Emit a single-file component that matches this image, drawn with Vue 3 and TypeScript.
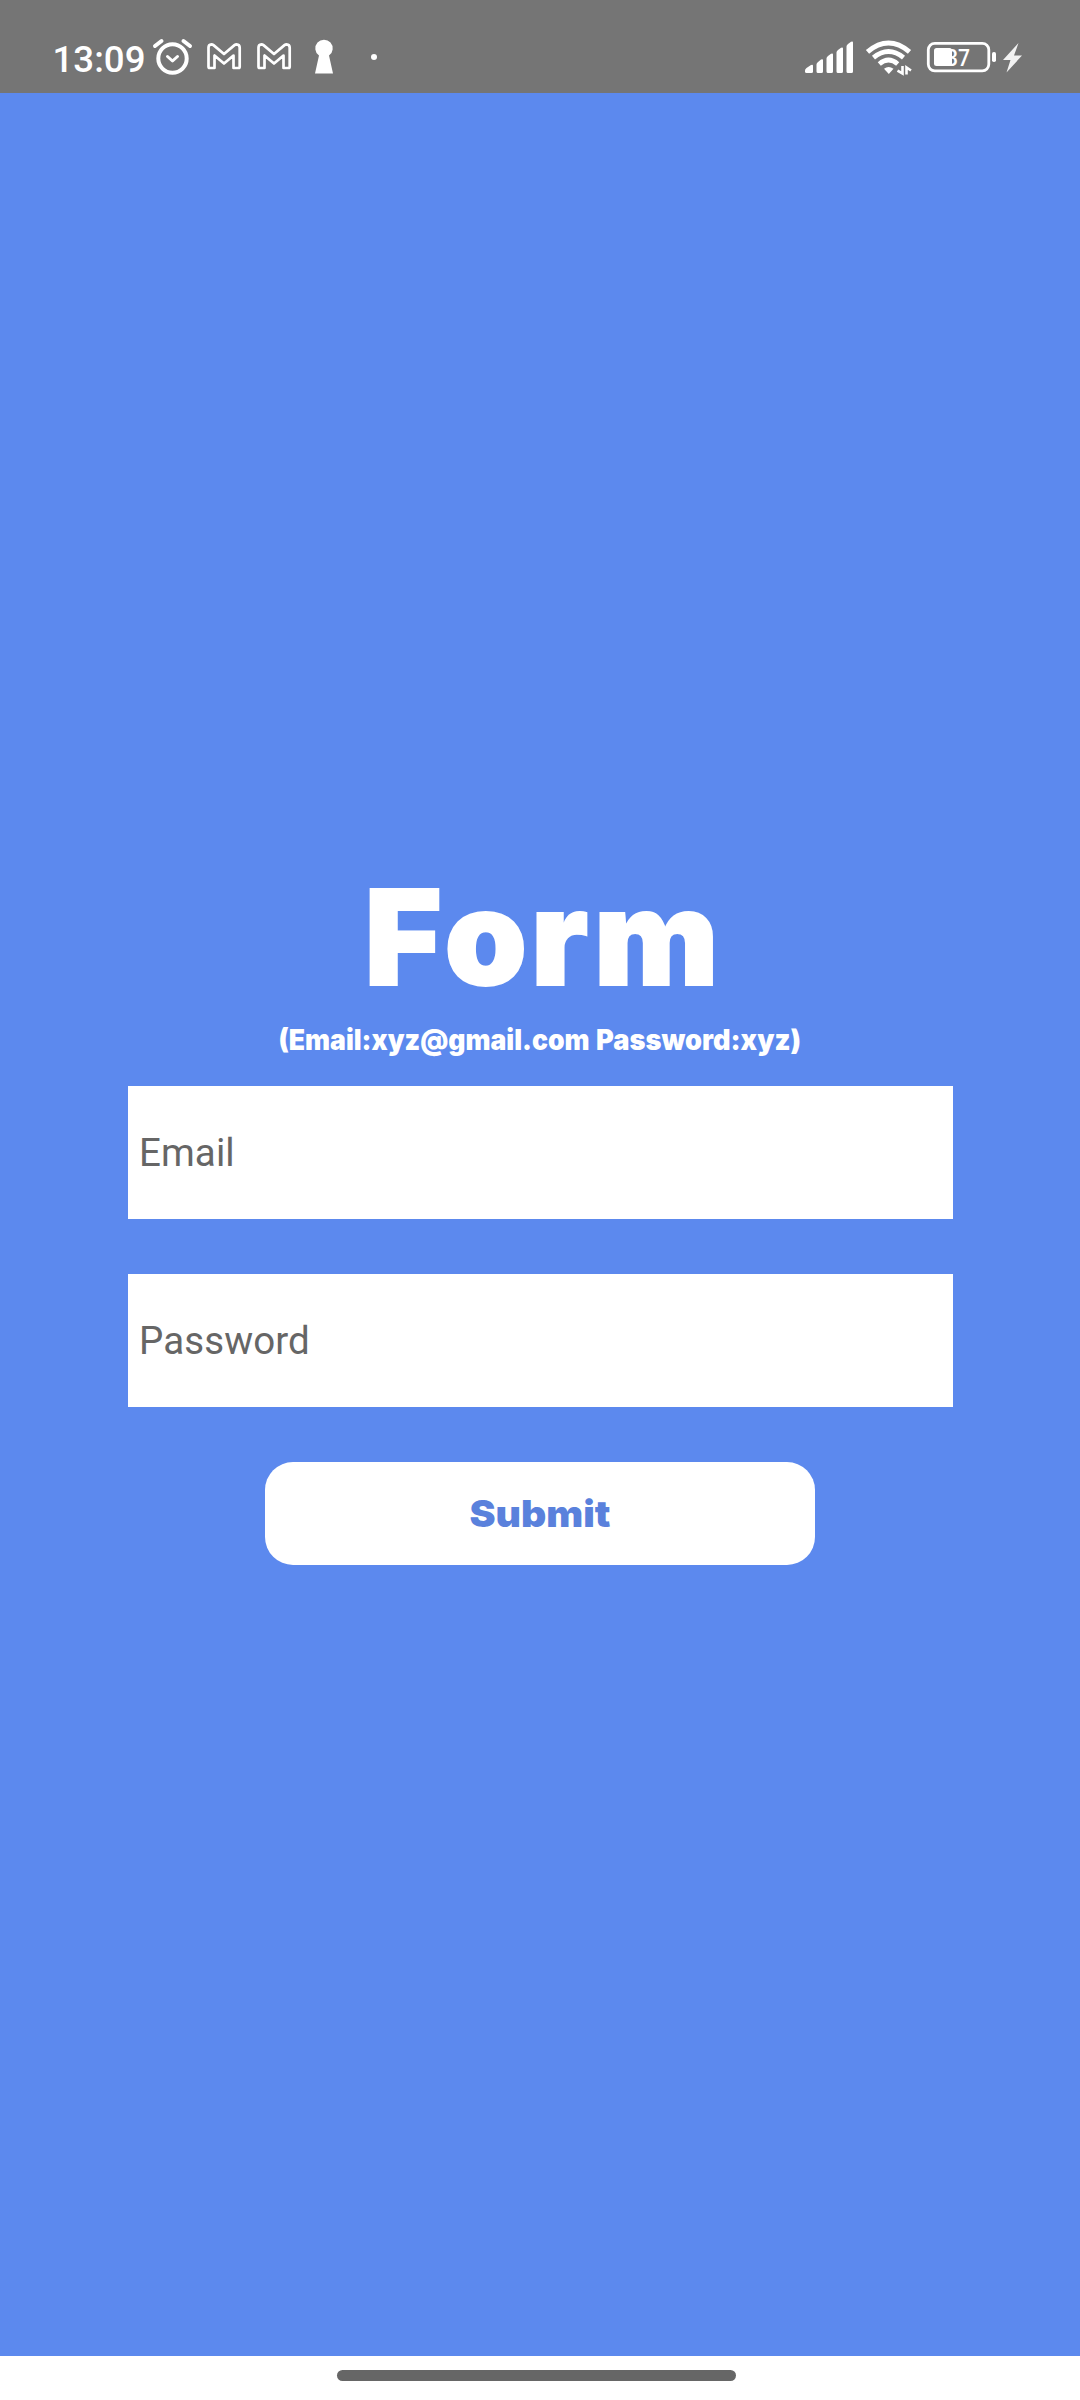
<script setup lang="ts">
import { ref } from 'vue'

interface Field {
  key: string
  label: string
  type: string
}

const fields: Field[] = [
  { key: 'email', label: 'Email', type: 'text' },
  { key: 'password', label: 'Password', type: 'password' },
]
const values = ref<Record<string, string>>({ email: '', password: '' })
</script>

<template>
  <div class="screen">
    <header class="status">
      <div class="group">
        <svg width="102" height="93" viewBox="50 0 102 93">
          <text x="52.5" y="71.700" class="clock" textLength="93" lengthAdjust="spacingAndGlyphs">13:09</text>
        </svg>
        <svg width="47" height="93" viewBox="152 0 47 93" fill="none" stroke="#fff" stroke-width="4" stroke-linecap="round">
          <circle cx="172.5" cy="58.500" r="14.200" />
          <path d="M155 46 161.500 41M190 46 183.500 41" />
          <path d="M167.500 56.500 172.500 61 177.500 56.500" stroke-width="3" stroke-linejoin="round" />
        </svg>
        <svg v-for="n in 2" :key="n" width="50" height="93" viewBox="199 0 50 93" fill="none" stroke="#fff" stroke-width="2.700" stroke-linejoin="round">
          <path d="M208.500 47.500q0-3 3-3.200q1 0 2 .8L224 54 234.500 45.100q1-.8 2-.8q3.200.2 3.200 3.200V66.800q0 1.200-1.200 1.200H233.500V55.500L224 63.500 214.500 55.500V68H209.700q-1.200 0-1.200-1.200Z" />
        </svg>
        <svg width="90" height="93" viewBox="299 0 90 93" fill="#fff">
          <path d="M319 55.500a8.700 8.700 0 1 1 10 0L333 73.500H315Z" />
          <circle cx="374" cy="57" r="3" />
        </svg>
      </div>
      <div class="group">
        <svg width="59" height="93" viewBox="800 0 59 93" fill="#fff">
          <path d="M805 70.500q0-1.500 1.500-2.500l4.500-3q2-1 2 .8V71.500q0 1.500-1.500 1.500h-5q-1.500 0-1.500-1.500Z" />
          <path d="M816.500 64.500q0-1.500 1.500-2.500l3-2.500q2-1 2 .8V71.500q0 1.500-1.500 1.500h-3.500q-1.500 0-1.500-1.500Z" />
          <path d="M826.500 58.500q0-1.500 1.500-2.500l3-2.200q2-1 2 .8V71.500q0 1.500-1.500 1.500h-3.500q-1.500 0-1.500-1.500Z" />
          <path d="M836.500 52.500q0-1.500 1.500-2.500l3-2.200q2-1 2 .8V71.500q0 1.500-1.500 1.500h-3.500q-1.500 0-1.500-1.500Z" />
          <path d="M846.500 46.500q0-1.500 1.500-2.500l3-2.200q2-1 2 .8V71.500q0 1.500-1.500 1.500h-3.500q-1.500 0-1.500-1.500Z" />
        </svg>
        <svg width="62" height="93" viewBox="859 0 62 93" fill="none" stroke="#fff">
          <path d="M867.500 51.800Q888.500 34.200 909.500 51.800" stroke-width="5" />
          <path d="M873.500 57.700Q888.500 45.500 903.500 57.700" stroke-width="4.800" />
          <path d="M879.300 64Q888.500 56.200 897.700 64" stroke-width="4.800" />
          <path d="M884 68.800Q888.500 65.300 893.500 68.800L888.800 74Z" fill="#fff" stroke="none" />
          <path d="M902.500 66V73.500L897.500 70.700M906.500 74.500V67.500L911 70.500" stroke-width="2.600" />
        </svg>
        <svg width="78" height="93" viewBox="921 0 78 93">
          <rect x="928.300" y="43.300" width="60.500" height="27.500" rx="6.500" fill="none" stroke="#fff" stroke-width="2.800" />
          <text x="946" y="66" class="level" textLength="24" lengthAdjust="spacingAndGlyphs">37</text>
          <rect x="934" y="48" width="18" height="18" rx="2.500" fill="#fff" />
          <rect x="992" y="52" width="4" height="10" rx="1.800" fill="#fff" />
        </svg>
        <svg width="27" height="93" viewBox="999 0 27 93" fill="#f2f2f2">
          <path d="M1018.500 43 1003 60H1010.500L1006.500 72.500 1022 55.500H1014Z" />
        </svg>
      </div>
    </header>

    <main class="page">
      <svg class="title" width="400" height="175" viewBox="340 840 400 175">
        <text y="985" x="364.500 444.500 531 594">Form</text>
      </svg>
      <svg class="hint" width="560" height="51" viewBox="260 1015 560 51">
        <text x="278.500" y="1050" textLength="311" lengthAdjust="spacingAndGlyphs">(Email:xyz@gmail.com</text>
        <text x="596" y="1050" textLength="205" lengthAdjust="spacingAndGlyphs">Password:xyz)</text>
      </svg>
      <input
        v-for="field in fields"
        :key="field.key"
        v-model="values[field.key]"
        class="field"
        :type="field.type"
        :placeholder="field.label"
      />
      <button class="submit" type="button">
        <svg width="160" height="60" viewBox="460 1484 160 60">
          <text x="469.500" y="1527" textLength="141" lengthAdjust="spacingAndGlyphs">Submit</text>
        </svg>
      </button>
    </main>

    <footer class="nav"><div class="handle"></div></footer>
  </div>
</template>

<style>
body {
  margin: 0;
}
</style>

<style scoped>
.screen {
  display: flex;
  flex-direction: column;
  width: 1080px;
  height: 2400px;
  overflow: hidden;
  background: #5c89ee;
  font-family: Roboto, sans-serif;
}
svg {
  display: block;
  flex: none;
}
.status {
  display: flex;
  justify-content: space-between;
  box-sizing: border-box;
  height: 93px;
  padding: 0 54px 0 50px;
  background: #757575;
}
.group {
  display: flex;
}
.clock {
  font: 500 37px Roboto, sans-serif;
  fill: #fff;
}
.level {
  font: 500 23px Roboto, sans-serif;
  fill: #fff;
}
.page {
  display: flex;
  flex: 1;
  flex-direction: column;
  align-items: center;
  padding-top: 747px;
}
.title {
  overflow: visible;
}
.title text {
  font: 900 132px Inter, sans-serif;
  fill: #fff;
  stroke: #fff;
  stroke-width: 2px;
}
.hint {
  margin-bottom: 20px;
}
.hint text {
  font: 900 28px Inter, sans-serif;
  fill: #fff;
}
.field {
  box-sizing: border-box;
  width: 825px;
  height: 133px;
  margin: 0 0 55px 1px;
  padding: 0 11px;
  border: 0;
  border-radius: 0;
  outline: 0;
  background: #fff;
  color: #222;
  font: 400 38.500px Roboto, sans-serif;
}
.field::placeholder {
  color: #666;
  opacity: 1;
  letter-spacing: 0.1px;
}
.submit {
  display: flex;
  align-items: center;
  justify-content: center;
  width: 550px;
  height: 103px;
  padding: 0;
  border: 0;
  border-radius: 28px;
  background: #fff;
}
.submit text {
  font: 900 37px Inter, sans-serif;
  fill: #5a81dc;
}
.nav {
  box-sizing: border-box;
  height: 44px;
  padding: 14px 0 0 337px;
  background: #fff;
}
.handle {
  width: 399px;
  height: 11px;
  border-radius: 6px;
  background: #666;
}
</style>
